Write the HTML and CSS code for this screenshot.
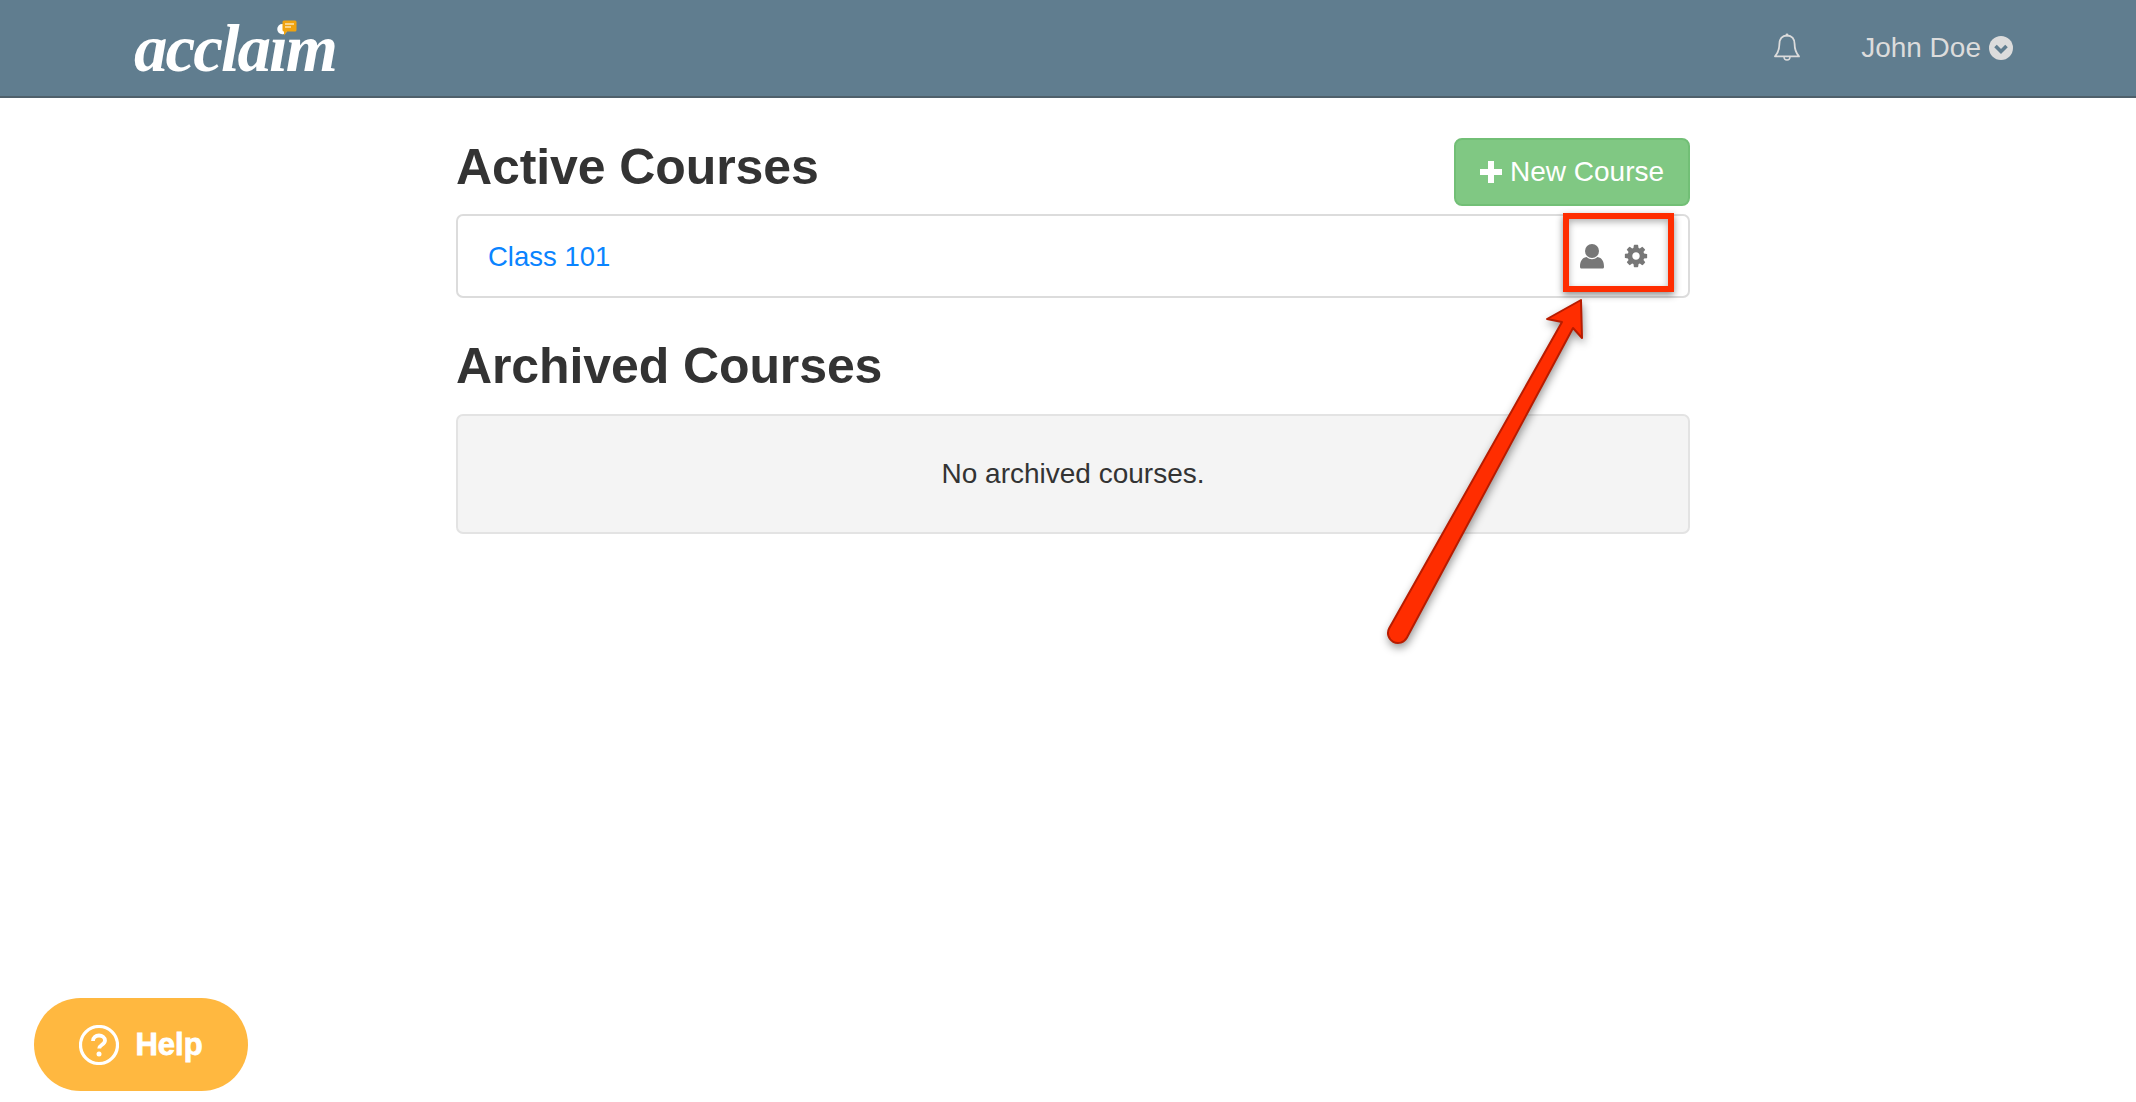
FILE: index.html
```html
<!DOCTYPE html>
<html lang="en-US">
  <head>
    <title>Acclaim - Courses</title>
    <meta charset="utf-8" />
    <link rel="stylesheet" href="styles.css">
  </head>
  <body>
    <header id="topBar">
      <div class="logo">
        acclaim
        <svg class="logoBubble" width="16" height="16" viewBox="0 0 16 16">
          <path d="M2 0.5h11a1.5 1.5 0 0 1 1.5 1.5v8a1.5 1.5 0 0 1-1.5 1.5h-8l-3 4v-4a1.5 1.5 0 0 1-1.5-1.5v-8a1.5 1.5 0 0 1 1.5-1.5z" fill="#f0a30f" />
          <path d="M3 4h9M3 7h6" stroke="#fbe3b0" stroke-width="1.5" />
        </svg>
      </div>
      <div class="topRight">
        <svg class="bell" width="28" height="30" viewBox="0 0 28 30">
          <path d="M14 2.5c-5 0-7.6 3.6-7.6 8.5 0 6-1.4 9-4.4 12.4h24c-3-3.4-4.4-6.4-4.4-12.4 0-4.900-2.600-8.500-7.600-8.500z" fill="none" stroke="#dcdcdc" stroke-width="1.8" stroke-linejoin="round" />
          <path d="M11 24a3 3 0 0 0 6 0" fill="none" stroke="#dcdcdc" stroke-width="1.400" />
          <circle cx="14" cy="2" r="1.400" fill="#dcdcdc" />
        </svg>
        <span class="userName">John Doe</span>
        <svg width="24" height="24" viewBox="0 0 24 24">
          <circle cx="12" cy="12" r="12" fill="#dcdcdc" />
          <path d="M6.500 10l5.500 5.500 5.500-5.500" fill="none" stroke="#607d8f" stroke-width="3.600" />
        </svg>
      </div>
    </header>
    <main>
      <div class="titleRow">
        <h1>Active Courses</h1>
        <button class="newCourse" type="button">
          <svg width="22" height="22" viewBox="0 0 22 22">
            <path d="M8 0h6v8h8v6h-8v8h-6v-8h-8v-6h8z" fill="white" />
          </svg>
          New Course
        </button>
      </div>
      <div class="coursePanel">
        <a href="#">Class 101</a>
        <div class="courseIcons">
          <svg width="24" height="25" viewBox="0 0 24 25">
            <circle cx="12" cy="7" r="7" fill="#777" />
            <path d="M1.500 24.500c-1 0-1.500-.6-1.500-1.800 0-5.200 2-8.900 6.500-9.700 2 1.700 3.500 2.200 5.500 2.200s3.500-.5 5.500-2.200c4.500.8 6.500 4.500 6.500 9.700 0 1.200-.5 1.800-1.500 1.800z" fill="#777" />
          </svg>
          <svg width="26" height="26" viewBox="0 0 1792 1792">
            <path d="M1152 896q0-106-75-181t-181-75-181 75-75 181 75 181 181 75 181-75 75-181zm512-109v222q0 12-8 23t-20 13l-185 28q-19 54-39 91 35 50 107 138 10 12 10 25t-9 23q-27 37-99 108t-94 71q-12 0-26-9l-138-108q-44 23-91 38-16 136-29 186-7 28-36 28h-222q-14 0-24.500-8.500t-11.500-21.500l-28-184q-49-16-90-37l-141 107q-10 9-25 9-14 0-25-11-126-114-165-168-7-10-7-23 0-12 8-23 15-21 51-66.500t54-70.500q-27-50-41-99l-183-27q-13-2-21-12.500t-8-23.500v-222q0-12 8-23t19-13l186-28q14-46 39-92-40-57-107-138-10-12-10-24 0-10 9-23 26-36 98.500-107.500t94.500-71.500q13 0 26 10l138 107q44-23 91-38 16-136 29-186 7-28 36-28h222q14 0 24.500 8.500t11.500 21.500l28 184q49 16 90 37l142-107q9-9 24-9 13 0 25 10 129 119 165 170 7 8 7 22 0 12-8 23-15 21-51 66.500t-54 70.500q26 50 41 98l183 28q13 2 21 12.500t8 23.500z" fill="#777" />
          </svg>
        </div>
      </div>
      <h1 class="archivedTitle">Archived Courses</h1>
      <div class="emptyPanel">No archived courses.</div>
    </main>

    <!-- annotation drawn on top of the page -->
    <div class="redBox"></div>
    <svg class="redArrow" width="2136" height="1102" viewBox="0 0 2136 1102">
      <path d="M1389.200 628.200L1562 322L1547 319L1581 300L1582 338L1573 328L1406.800 637.800A10 10 0 0 1 1389.200 628.200Z" fill="#ff2d00" stroke="#b81c00" stroke-width="2" stroke-linejoin="round" />
    </svg>

    <button class="helpButton" type="button">
      <svg width="40" height="40" viewBox="0 0 40 40">
        <circle cx="20" cy="20" r="18.500" fill="none" stroke="white" stroke-width="3.200" />
        <path d="M14 16c0-3.500 2.700-5.500 6-5.500s6 2 6 5c0 4.200-5.800 4.300-5.800 8" fill="none" stroke="white" stroke-width="3.800" />
        <circle cx="20" cy="29" r="2.500" fill="white" />
      </svg>
      Help
    </button>
  </body>
</html>
```
FILE: styles.css
```css
* {
  box-sizing: border-box;
}
html {
  background-color: white;
}
body {
  margin: 0;
  color: hsl(0, 0%, 20%);
  font-family: "Liberation Sans", arial, sans-serif;
}
#topBar {
  display: flex;
  justify-content: space-between;
  align-items: center;
  height: 98px;
  padding: 0 123px 0 134px;
  border-bottom: 2px solid #4f606b;
  background-color: #607d8f;
}
.logo {
  position: relative;
  color: white;
  font-family: "Liberation Serif", serif;
  font-size: 67px;
  font-style: italic;
  font-weight: bold;
  letter-spacing: -2px;
  line-height: 92px;
}
.logoBubble {
  position: absolute;
  top: 18px;
  left: 148px;
}
.topRight {
  display: flex;
  align-items: center;
}
.bell {
  margin-right: 60px;
}
.userName {
  margin-right: 8px;
  color: #dcdcdc;
  font-size: 28px;
}
main {
  width: 1234px;
  margin-left: 456px;
}
.titleRow {
  display: flex;
  justify-content: space-between;
  align-items: flex-start;
  padding-top: 40px;
}
h1 {
  margin: 0;
  font-size: 50px;
  font-weight: bold;
  letter-spacing: -0.1px;
  line-height: 58px;
}
.newCourse {
  display: flex;
  justify-content: center;
  align-items: center;
  gap: 8px;
  width: 236px;
  height: 68px;
  border: 2px solid #72bf76;
  border-radius: 8px;
  background: #80c883;
  color: white;
  font-family: inherit;
  font-size: 28px;
}
.coursePanel {
  display: flex;
  justify-content: space-between;
  align-items: center;
  height: 84px;
  margin-top: 8px;
  padding: 0 39px 0 30px;
  border: 2px solid #dcdcdc;
  border-radius: 7px;
}
.coursePanel a {
  padding-top: 1px;
  color: #0a84ff;
  font-size: 27.5px;
  text-decoration: none;
}
.courseIcons {
  display: flex;
  align-items: center;
  gap: 19px;
}
.archivedTitle {
  margin-top: 39px;
}
.emptyPanel {
  display: flex;
  justify-content: center;
  align-items: center;
  height: 120px;
  margin-top: 19px;
  border: 2px solid #e3e3e3;
  border-radius: 7px;
  background-color: #f4f4f4;
  font-size: 28px;
}
.redBox {
  position: absolute;
  top: 213px;
  left: 1563px;
  width: 111px;
  height: 79px;
  border: 6px solid #ff2d00;
  box-shadow: 0 3px 7px hsla(0, 0%, 0%, 0.45), inset 0 3px 7px hsla(0, 0%, 0%, 0.3);
}
.redArrow {
  position: absolute;
  top: 0;
  left: 0;
  filter: drop-shadow(1px 4px 4px hsla(0, 0%, 0%, 0.4));
  pointer-events: none;
}
.helpButton {
  position: absolute;
  top: 998px;
  left: 34px;
  display: flex;
  justify-content: center;
  align-items: center;
  gap: 16px;
  width: 214px;
  height: 93px;
  border: none;
  border-radius: 47px;
  background: #ffb840;
  color: white;
  font-family: inherit;
  font-size: 31px;
  font-weight: bold;
  -webkit-text-stroke: 0.8px white;
}
```
